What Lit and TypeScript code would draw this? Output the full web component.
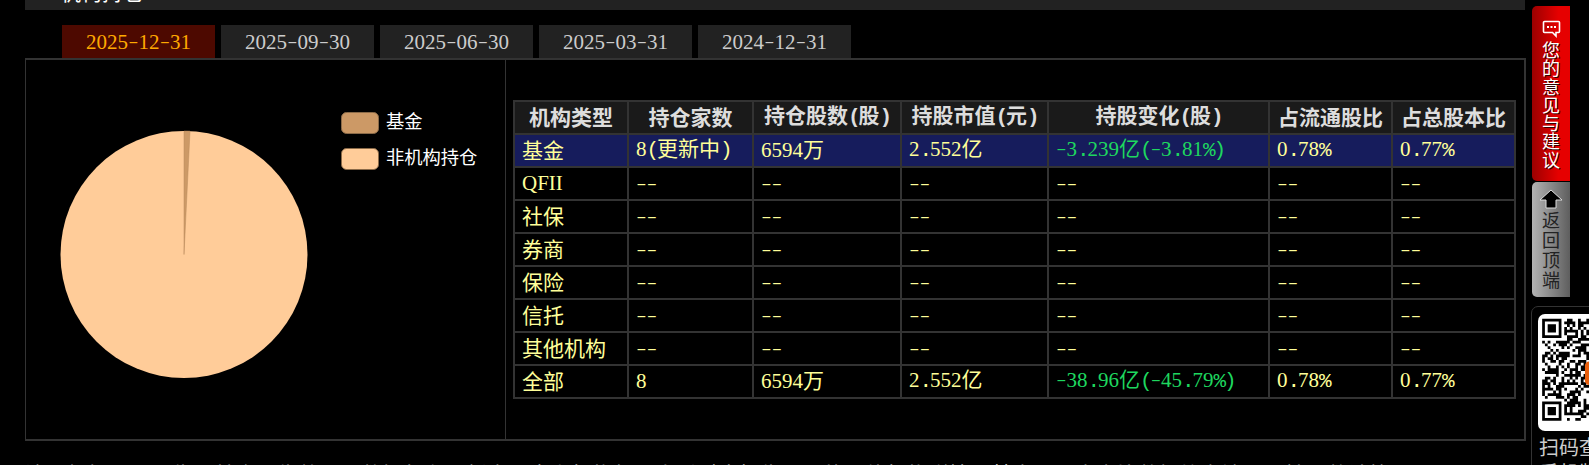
import { LitElement, html, css, svg } from "lit";
import { customElement } from "lit/decorators.js";

const runs = (s: string) =>
  s.split(/(\d+|[A-Za-z]+|-+|[^\dA-Za-z\u0080-\uffff-]+)/).map((p) => {
    if (!p) return "";
    if (/^\d+$/.test(p)) return html`<span class="d">${p}</span>`;
    if (/^[A-Za-z]+$/.test(p)) return html`<span class="d">${p}</span>`;
    if (/^-+$/.test(p)) return html`<span class="h">${p}</span>`;
    if (/^[^\u0080-\uffff]+$/.test(p)) return html`<span class="m">${p}</span>`;
    return p;
  });

const HEAD = ["机构类型", "持仓家数", "持仓股数(股)", "持股市值(元)", "持股变化(股)", "占流通股比", "占总股本比"];
const EMPTY = ["--", "--", "--", "--", "--", "--"];
const ROWS: { name: string; v: string[]; on?: boolean }[] = [
  { name: "基金", v: ["8(更新中)", "6594万", "2.552亿", "-3.239亿(-3.81%)", "0.78%", "0.77%"], on: true },
  { name: "QFII", v: EMPTY },
  { name: "社保", v: EMPTY },
  { name: "券商", v: EMPTY },
  { name: "保险", v: EMPTY },
  { name: "信托", v: EMPTY },
  { name: "其他机构", v: EMPTY },
  { name: "全部", v: ["8", "6594万", "2.552亿", "-38.96亿(-45.79%)", "0.78%", "0.77%"] },
];
const TABS = ["2025-12-31", "2025-09-30", "2025-06-30", "2025-03-31", "2024-12-31"];

function qrPath(): string {
  const n = 37;
  let seed = 20251231;
  const rnd = () => {
    seed = (seed * 1664525 + 1013904223) >>> 0;
    return seed / 4294967296;
  };
  const inFinder = (x: number, y: number) =>
    (x < 8 && y < 8) || (x < 8 && y >= n - 8) || (x >= n - 8 && y < 8);
  let d = "";
  for (let y = 0; y < n; y++) {
    for (let x = 0; x < n; x++) {
      if (inFinder(x, y)) continue;
      if (rnd() < 0.52) d += `M${x} ${y}h1v1h-1z`;
    }
  }
  for (const [fx, fy] of [[0, 0], [0, n - 7], [n - 7, 0]]) {
    d += `M${fx} ${fy}h7v7h-7zM${fx + 1} ${fy + 1}v5h5v-5zM${fx + 2} ${fy + 2}h3v3h-3z`;
  }
  return d;
}

@customElement("app-root")
export class AppRoot extends LitElement {
  static styles = css`
    :host {
      display: block;
      position: relative;
      width: 1589px;
      height: 465px;
      overflow: hidden;
      background: #000;
      font-family: "Noto Sans CJK SC", sans-serif;
      font-size: 21px;
      line-height: 24px;
      color: #ccc;
    }
    .d { font-family: "Liberation Serif", serif; font-size: 21px; }
    .m { font-family: "Liberation Mono", monospace; font-size: 21px; letter-spacing: -2.1px; }
    .h {
      display: inline-block;
      font-family: "Liberation Mono", monospace;
      font-size: 28px;
      line-height: 0;
      letter-spacing: -6.3px;
      transform: translate(-3px, 5px) scaleY(0.5);
      transform-origin: 50% -7px;
    }
    .main { display: flex; flex-direction: column; width: 1501px; margin-left: 25px; }
    .topbar {
      width: 1500px;
      height: 10px;
      background: #222;
      overflow: hidden;
      box-sizing: border-box;
      padding-left: 35px;
      margin-bottom: 15px;
    }
    .topbar div { margin-top: -21px; color: #fff; font-size: 21px; }
    .tabs { display: flex; gap: 6px; margin-left: 37px; }
    .tab {
      width: 153px;
      height: 33px;
      background: #222;
      color: #ccc;
      display: flex;
      align-items: center;
      justify-content: center;
    }
    .tab.on { background: #4d0900; color: #fa0; }
    .box {
      display: flex;
      box-sizing: border-box;
      height: 383px;
      border: 1px solid #333;
      border-width: 2px 2px 2px 1px;
    }
    .chart { width: 479px; height: 379px; border-right: 1px solid #333; flex: none; display: block; }
    .chart text { font-family: "Noto Sans CJK SC", sans-serif; font-size: 18.3px; fill: #fff; }
    .right { padding: 40px 0 0 7px; }
    table {
      border-collapse: collapse;
      table-layout: fixed;
      width: 1001px;
      color: #ff9;
    }
    th, td {
      border: 2px solid #333;
      height: 33px;
      padding: 0 0 4px;
      box-sizing: border-box;
      white-space: nowrap;
      line-height: 20px;
    }
    th { background: #1a1a1a; color: #ddd; font-weight: 700; text-align: center; }
    th .m { font-weight: 700; }
    td { padding-left: 7px; font-weight: 400; }
    tr.on td { background: #161c5c; }
    td.g { color: #1ed75f; }
    th:nth-child(1) { width: 114px; }
    th:nth-child(2) { width: 125px; }
    th:nth-child(3) { width: 148px; }
    th:nth-child(4) { width: 147px; }
    th:nth-child(5) { width: 221px; }
    th:nth-child(6) { width: 123px; }
    th:nth-child(7) { width: 123px; }
    .note { margin-top: 20px; color: #bbb; white-space: nowrap; }
    .rail {
      position: absolute;
      left: 1532px;
      top: 6px;
      width: 57px;
      display: flex;
      flex-direction: column;
      align-items: flex-start;
    }
    .btn {
      width: 38px;
      display: flex;
      flex-direction: column;
      align-items: center;
      border-radius: 5px 0 0 5px;
      box-sizing: border-box;
    }
    .feedback {
      height: 175px;
      margin-bottom: 1px;
      padding-top: 14px;
      background: linear-gradient(90deg, #9c0000, #e60000 70%);
      color: #fff;
      font-size: 18px;
      line-height: 18.3px;
      text-shadow: 1px 1px 0 #300;
    }
    .feedback svg { margin-bottom: 2px; }
    .top {
      height: 115px;
      padding-top: 7px;
      background: linear-gradient(90deg, #b4b4b4, #5e5e5e);
      color: #222;
      font-size: 18px;
      line-height: 20px;
    }
    .chars { width: 1em; text-align: center; word-break: break-all; }
    .card {
      margin-top: 9px;
      margin-left: -1px;
      width: 140px;
      height: 200px;
      box-sizing: border-box;
      border: 1px solid #333;
      border-radius: 7px;
      padding: 7px 6px;
      color: #ccc;
    }
    .qr { display: block; width: 116px; height: 117px; background: #fff; border-radius: 7px; }
    .scan { margin-top: 3px; margin-left: 1px; font-size: 20px; line-height: 26px; white-space: nowrap; }
  `;

  render() {
    return html`
      <div class="main">
        <div class="topbar"><div>机构持仓</div></div>
        <div class="tabs">
          ${TABS.map((t, i) => html`<div class="tab ${i === 0 ? "on" : ""}">${runs(t)}</div>`)}
        </div>
        <div class="box">
          <svg class="chart" viewBox="0 0 479 379" width="479" height="379">
            ${svg`
              <circle cx="158" cy="194.5" r="123.5" fill="#ffcc99" />
              <path d="M158 194.5 L158 71 A123.5 123.5 0 0 1 164 71.1 Z" fill="#cc9966" stroke="#b98a5c" stroke-width="0.5" />
              <rect x="315.5" y="52.5" width="37" height="21" rx="5" fill="#cc9966" stroke="#8a6a48" />
              <rect x="315.5" y="88.5" width="37" height="21" rx="5" fill="#ffcc99" stroke="#8a6a48" />
              <text x="360" y="68">基金</text>
              <text x="360" y="104">非机构持仓</text>
            `}
          </svg>
          <div class="right">
            <table>
              <thead><tr>${HEAD.map((h) => html`<th>${runs(h)}</th>`)}</tr></thead>
              <tbody>
                ${ROWS.map(
                  (r) => html`<tr class=${r.on ? "on" : ""}>
                    <td>${runs(r.name)}</td>
                    ${r.v.map((v, i) => html`<td class=${i === 3 && v !== "--" ? "g" : ""}>${runs(v)}</td>`)}
                  </tr>`
                )}
              </tbody>
            </table>
          </div>
        </div>
        <div class="note">注：根据公司公告与基金公告整理，数据每有更新中，由上机构行可直看对应报告期下的具体机构详情，其中，股本占比数据均为流通股持股数计算</div>
      </div>
      <div class="rail">
        <div class="btn feedback">
          <svg width="19" height="18" viewBox="0 0 19 18">
            <path d="M2.5 1.5h14a1 1 0 0 1 1 1v9a1 1 0 0 1-1 1h-2.5v3.5l-3.5-3.5h-8a1 1 0 0 1-1-1v-9a1 1 0 0 1 1-1z" fill="none" stroke="#fff" stroke-width="1.6" />
            <path d="M5 6h2v2h-2zM8.5 6h2v2h-2zM12 6h2v2h-2z" fill="#fff" />
          </svg>
          <div class="chars">您的意见与建议</div>
        </div>
        <div class="btn top">
          <svg width="24" height="20" viewBox="0 0 24 20">
            <path d="M12 1L23 11H17V19H7V11H1Z" fill="#000" stroke="#ddd" stroke-width="1" />
          </svg>
          <div class="chars">返回顶端</div>
        </div>
        <div class="card">
          <svg class="qr" viewBox="-1.5 -1.5 42 42">
            <path d=${qrPath()} fill="#000" fill-rule="evenodd" />
            <rect x="15.5" y="15.5" width="7" height="8.5" rx="1.5" fill="#e8600f" />
          </svg>
          <div class="scan">扫码查看<br />手机版</div>
        </div>
      </div>
    `;
  }
}
